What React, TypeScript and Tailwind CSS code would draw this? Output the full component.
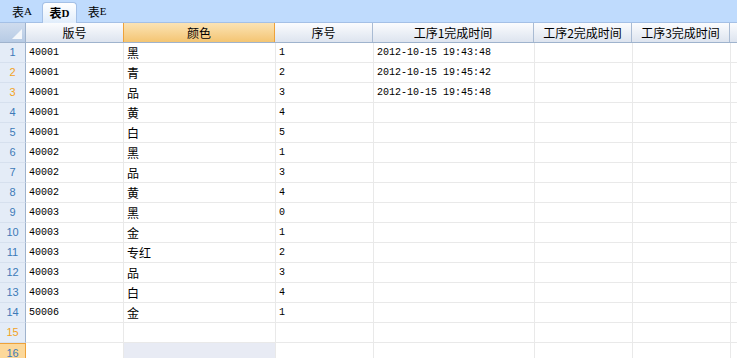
import React from "react";

const COLS = [
  { key: "no", title: "版号", w: 98 },
  { key: "color", title: "颜色", w: 152, selected: true },
  { key: "seq", title: "序号", w: 98 },
  { key: "t1", title: "工序1完成时间", w: 161 },
  { key: "t2", title: "工序2完成时间", w: 98 },
  { key: "t3", title: "工序3完成时间", w: 98 },
];

const ROWS: string[][] = [
  ["40001", "黑", "1", "2012-10-15 19:43:48"],
  ["40001", "青", "2", "2012-10-15 19:45:42"],
  ["40001", "品", "3", "2012-10-15 19:45:48"],
  ["40001", "黄", "4", ""],
  ["40001", "白", "5", ""],
  ["40002", "黑", "1", ""],
  ["40002", "品", "3", ""],
  ["40002", "黄", "4", ""],
  ["40003", "黑", "0", ""],
  ["40003", "金", "1", ""],
  ["40003", "专红", "2", ""],
  ["40003", "品", "3", ""],
  ["40003", "白", "4", ""],
  ["50006", "金", "1", ""],
  ["", "", "", ""],
  ["", "", "", ""],
];

const ORANGE_ROWS = [2, 3, 15];

const cjk = "font-['SimSun','Noto_Sans_CJK_SC',sans-serif]";
const mono = "font-['Liberation_Mono','Noto_Sans_CJK_SC',monospace]";

export default function App() {
  return (
    <div className="h-[358px] w-[737px] overflow-hidden bg-white text-black">
      <TabBar />
      <div className="flex h-[20px] border-b border-[#9fb3cd]">
        <div className="relative h-full w-[26px] shrink-0 border-r border-[#9fb3cd] bg-gradient-to-b from-[#cfdcee] to-[#b7cbe5]">
          <div className="absolute bottom-[3px] right-[3px] h-0 w-0 border-b-[10px] border-l-[10px] border-b-[#f4f7fb] border-l-transparent" />
        </div>
        {COLS.map((c) =>
          c.selected ? (
            <div
              key={c.key}
              style={{ width: c.w }}
              className={`-ml-px flex h-full shrink-0 items-center justify-center border-x border-[#eea23a] bg-gradient-to-b from-[#fbe3b4] to-[#f4c572] text-[12px] ${cjk}`}
            >
              {c.title}
            </div>
          ) : (
            <div
              key={c.key}
              style={{ width: c.w }}
              className={`flex h-full shrink-0 items-center justify-center border-r border-[#a9bbd3] bg-gradient-to-b from-[#fbfcfe] to-[#dde4ef] text-[12px] ${cjk}`}
            >
              {c.title}
            </div>
          )
        )}
        <div className="h-full flex-1 bg-gradient-to-b from-[#fbfcfe] to-[#dde4ef]" />
      </div>
      {ROWS.map((r, i) => {
        const n = i + 1;
        const last = n === 16;
        return (
          <div key={n} className="flex h-[20px]">
            <div
              className={`flex h-full w-[26px] shrink-0 items-center justify-center text-[11px] font-['Liberation_Sans',sans-serif] ${
                last
                  ? "border-r border-t border-[#eea23a] bg-[#fcd89a] text-[#3d7ab8]"
                  : "border-b border-r border-[#9fb3cd] border-b-[#d6e0ee] bg-[#e4ecf7] " +
                    (ORANGE_ROWS.includes(n) ? "text-[#f2a21e]" : "text-[#3d7ab8]")
              }`}
            >
              {n}
            </div>
            {COLS.map((c, j) => {
              const v = r[j] ?? "";
              const isCjk = j === 1;
              return (
                <div
                  key={c.key}
                  style={{ width: c.w }}
                  className={`flex h-full shrink-0 items-center overflow-hidden whitespace-nowrap border-b border-r border-[#e9e9e9] pl-[3px] ${
                    isCjk ? `text-[12px] ${cjk}` : `text-[10px] ${mono}`
                  } ${last && j === 1 ? "bg-[#e8ebf4]" : ""}`}
                >
                  {v}
                </div>
              );
            })}
            <div className="h-full flex-1 border-b border-[#e9e9e9]" />
          </div>
        );
      })}
    </div>
  );
}

function TabBar() {
  const tabs = [
    { label: "表", suffix: "A" },
    { label: "表", suffix: "D", active: true },
    { label: "表", suffix: "E" },
  ];
  return (
    <div className="flex h-[23px] items-end border-b border-[#a4c0e6] bg-[#bfdbfd] pl-[2px]">
      {tabs.map((t) =>
        t.active ? (
          <div
            key={t.suffix}
            className={`-mb-px flex h-[21px] w-[35px] items-center justify-center rounded-t-[4px] border border-b-0 border-[#a4c0e6] bg-gradient-to-b from-[#ffffff] to-[#e1edfb] text-[12px] font-bold ${cjk}`}
          >
            {t.label}
            <span className="font-['Liberation_Serif',serif] text-[11px]">{t.suffix}</span>
          </div>
        ) : (
          <div
            key={t.suffix}
            className={`flex h-[21px] w-[40px] items-center justify-center text-[12px] ${cjk}`}
          >
            {t.label}
            <span className="font-['Liberation_Serif',serif] text-[11px]">{t.suffix}</span>
          </div>
        )
      )}
    </div>
  );
}
